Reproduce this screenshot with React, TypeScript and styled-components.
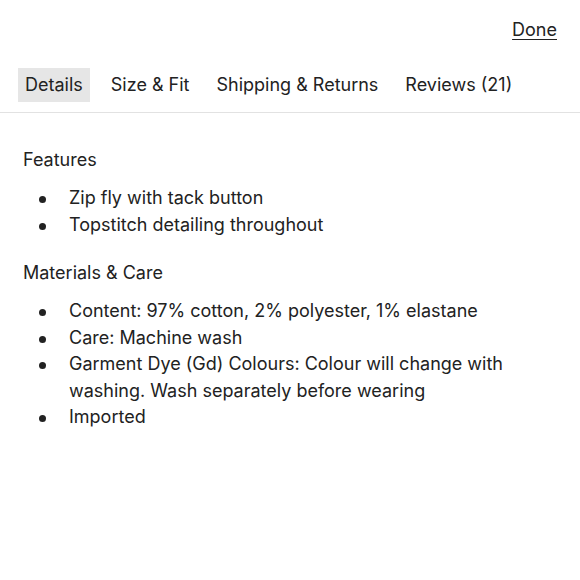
import React from 'react';
import styled, { createGlobalStyle } from 'styled-components';

const GlobalStyle = createGlobalStyle`
  html, body {
    margin: 0;
    padding: 0;
    background: #fff;
  }
  body {
    font-family: Inter, "Noto Sans", sans-serif;
    color: #222;
  }
`;

const Page = styled.div`
  width: 580px;
  height: 580px;
  display: flex;
  flex-direction: column;
`;

const TopBar = styled.div`
  display: flex;
  justify-content: flex-end;
  padding: 17px 23px 0 0;
  height: 50px;
  box-sizing: border-box;
`;

const DoneLink = styled.a`
  font-size: 18px;
  line-height: 26px;
  color: #222;
  text-decoration: underline;
  text-underline-offset: 3px;
  cursor: pointer;
`;

const TabBar = styled.nav`
  display: flex;
  align-items: center;
  gap: 15px;
  padding: 18px 0 10px 18px;
  border-bottom: 1px solid #e2e2e2;
`;

const Tab = styled.button<{ $active?: boolean }>`
  font-family: inherit;
  font-size: 18px;
  line-height: 34px;
  height: 34px;
  padding: 0 ${({ $active }) => ($active ? 7 : 6)}px;
  border: none;
  color: #222;
  background: ${({ $active }) => ($active ? '#e6e6e6' : 'transparent')};
  cursor: pointer;
`;

const Content = styled.section`
  padding: 34px 0 0 23px;
`;

const SectionTitle = styled.h3`
  margin: 0 0 12px;
  font-size: 18px;
  font-weight: 400;
  line-height: 26px;
`;

const List = styled.ul`
  margin: 0 0 22px;
  padding: 0;
  list-style: none;
`;

const Item = styled.li`
  position: relative;
  padding-left: 46px;
  padding-right: 60px;
  font-size: 18px;
  line-height: 26.5px;

  &::before {
    content: '';
    position: absolute;
    left: 16px;
    top: 11px;
    width: 7px;
    height: 7px;
    border-radius: 50%;
    background: #222;
  }
`;

const sections = [
  {
    title: 'Features',
    items: ['Zip fly with tack button', 'Topstitch detailing throughout'],
  },
  {
    title: 'Materials & Care',
    items: [
      'Content: 97% cotton, 2% polyester, 1% elastane',
      'Care: Machine wash',
      'Garment Dye (Gd) Colours: Colour will change with washing. Wash separately before wearing',
      'Imported',
    ],
  },
];

const tabs = ['Details', 'Size & Fit', 'Shipping & Returns', 'Reviews (21)'];

export default function App() {
  return (
    <Page>
      <GlobalStyle />
      <TopBar>
        <DoneLink>Done</DoneLink>
      </TopBar>
      <TabBar>
        {tabs.map((t, i) => (
          <Tab key={t} $active={i === 0}>{t}</Tab>
        ))}
      </TabBar>
      <Content>
        {sections.map((s) => (
          <div key={s.title}>
            <SectionTitle>{s.title}</SectionTitle>
            <List>
              {s.items.map((it) => (
                <Item key={it}>{it}</Item>
              ))}
            </List>
          </div>
        ))}
      </Content>
    </Page>
  );
}
